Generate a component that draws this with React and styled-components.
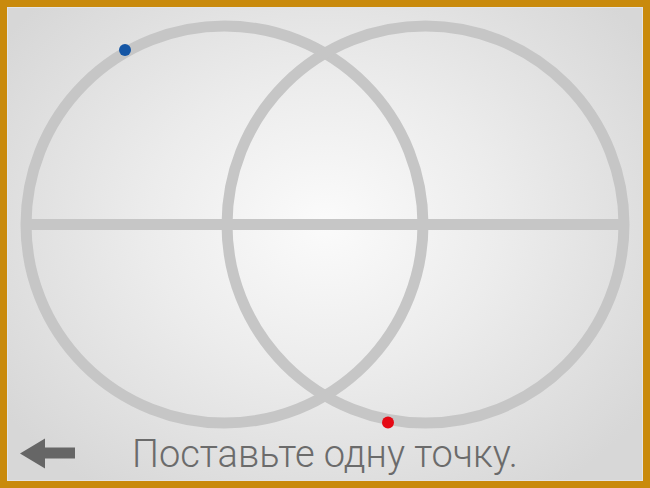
import React from "react";
import styled, { createGlobalStyle } from "styled-components";

const Global = createGlobalStyle`
  html, body { margin: 0; padding: 0; }
  body { width: 650px; height: 488px; overflow: hidden; font-family: Roboto, "Noto Sans", sans-serif; }
`;

const Frame = styled.div`
  box-sizing: border-box;
  width: 650px;
  height: 488px;
  background: #c98a0c;
  padding: 7px 7px 7px 7px;
`;

const Panel = styled.div`
  box-sizing: border-box;
  width: 636px;
  height: 474px;
  display: flex;
  flex-direction: column;
  background: radial-gradient(ellipse 62% 68% at 50% 46%, #fbfbfb 0%, #ececec 45%, #d7d7d7 100%);
  box-shadow: inset 0 0 0 1px #e4e4e4;
`;

const Drawing = styled.svg`
  display: block;
  width: 636px;
  height: 426px;
  flex: none;
  overflow: visible;
`;

const Footer = styled.div`
  flex: 1;
  display: grid;
  grid-template-columns: 1fr auto 1fr;
  align-items: center;
  padding-bottom: 8px;
`;

const BackButton = styled.button`
  justify-self: start;
  margin-left: 13px;
  padding: 0;
  border: none;
  background: none;
  display: flex;
  cursor: pointer;
`;

const Prompt = styled.div`
  font-family: Roboto, "Noto Sans", sans-serif;
  font-weight: 300;
  font-size: 38px;
  line-height: 1;
  color: #6b6b6b;
  white-space: nowrap;
  margin-top: 1px;
`;

const STROKE = "#c6c6c6";

export default function App() {
  return (
    <>
      <Global />
      <Frame>
        <Panel>
          <Drawing viewBox="7 7 636 426">
            <circle cx="224.5" cy="224.5" r="198.5" fill="none" stroke={STROKE} strokeWidth="11" />
            <circle cx="425.5" cy="224.5" r="198.5" fill="none" stroke={STROKE} strokeWidth="11" />
            <line x1="26" y1="224.5" x2="624" y2="224.5" stroke={STROKE} strokeWidth="11" />
            <circle cx="125" cy="50" r="6" fill="#1556a5" />
            <circle cx="388" cy="422.5" r="6" fill="#e50914" />
          </Drawing>
          <Footer>
            <BackButton aria-label="Назад">
              <svg width="56" height="31" viewBox="0 0 56 31">
                <path d="M0 15.5 L25 0.5 L25 9.5 L55 9.5 L55 20.5 L25 20.5 L25 30.5 Z" fill="#666666" />
              </svg>
            </BackButton>
            <Prompt>Поставьте одну точку.</Prompt>
            <span />
          </Footer>
        </Panel>
      </Frame>
    </>
  );
}
